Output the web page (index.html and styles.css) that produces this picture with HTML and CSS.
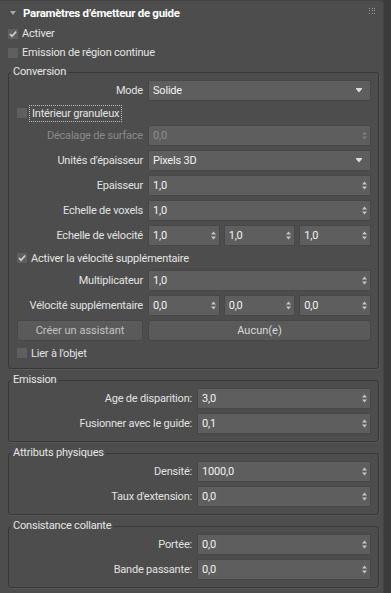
FILE: index.html
```html
<!DOCTYPE html>
<html lang="fr">
<head>
  <meta charset="UTF-8">
  <meta name="viewport" content="width=device-width, initial-scale=1.0">
  <title>Paramètres d'émetteur de guide</title>
  <link rel="stylesheet" href="styles.css">
</head>
<body>
  <div class="panel">
    <div class="head">
      <svg class="fold" width="6" height="5" viewBox="0 0 6 5"><polygon points="0,0 6,0 3,4" fill="#a8a8a8"/></svg>
      <span class="title">Paramètres d’émetteur de guide</span>
      <svg class="grip" width="7" height="7" viewBox="0 0 7 7">
        <g fill="#9a9a9a">
          <rect x="0" y="0" width="1" height="1"/><rect x="3" y="0" width="1" height="1"/><rect x="5" y="0" width="1" height="1"/>
          <rect x="0" y="2" width="1" height="1"/><rect x="3" y="2" width="1" height="1"/><rect x="5" y="2" width="1" height="1"/>
          <rect x="0" y="5" width="1" height="1"/><rect x="3" y="5" width="1" height="1"/><rect x="5" y="5" width="1" height="1"/>
        </g>
      </svg>
    </div>

    <label class="check top"><span class="box"><svg width="10" height="10" viewBox="0 0 10 10"><path d="M2 5 L4 7.2 L8.2 2.5" fill="none" stroke="#d4d4d4" stroke-width="1.6"/></svg></span>Activer</label>
    <label class="check top"><span class="box"></span>Emission de région continue</label>

    <fieldset class="group first">
      <legend>Conversion</legend>
      <div class="rows conv">
        <span class="lbl">Mode</span>
        <div class="field drop">Solide<svg width="6" height="5" viewBox="0 0 6 5"><polygon points="0,0 6,0 6,1 3,4.5 0,1" fill="#dcdcdc"/></svg></div>

        <label class="check wide"><span class="box"></span><span class="focus">Intérieur granuleux</span></label>

        <span class="lbl off">Décalage de surface</span>
        <div class="field off">0,0<svg class="spin" width="5" height="9" viewBox="0 0 5 9"><polygon points="0,3.5 2.5,0.5 5,3.5" /><polygon points="0,5.5 5,5.5 2.5,8.5"/></svg></div>

        <span class="lbl">Unités d'épaisseur</span>
        <div class="field drop">Pixels 3D<svg width="6" height="5" viewBox="0 0 6 5"><polygon points="0,0 6,0 6,1 3,4.5 0,1" fill="#dcdcdc"/></svg></div>

        <span class="lbl">Epaisseur</span>
        <div class="field">1,0<svg class="spin" width="5" height="9" viewBox="0 0 5 9"><polygon points="0,3.5 2.5,0.5 5,3.5" /><polygon points="0,5.5 5,5.5 2.5,8.5"/></svg></div>

        <span class="lbl">Echelle de voxels</span>
        <div class="field">1,0<svg class="spin" width="5" height="9" viewBox="0 0 5 9"><polygon points="0,3.5 2.5,0.5 5,3.5" /><polygon points="0,5.5 5,5.5 2.5,8.5"/></svg></div>

        <span class="lbl">Echelle de vélocité</span>
        <div class="triple">
          <div class="field">1,0<svg class="spin" width="5" height="9" viewBox="0 0 5 9"><polygon points="0,3.5 2.5,0.5 5,3.5" /><polygon points="0,5.5 5,5.5 2.5,8.5"/></svg></div>
          <div class="field">1,0<svg class="spin" width="5" height="9" viewBox="0 0 5 9"><polygon points="0,3.5 2.5,0.5 5,3.5" /><polygon points="0,5.5 5,5.5 2.5,8.5"/></svg></div>
          <div class="field">1,0<svg class="spin" width="5" height="9" viewBox="0 0 5 9"><polygon points="0,3.5 2.5,0.5 5,3.5" /><polygon points="0,5.5 5,5.5 2.5,8.5"/></svg></div>
        </div>

        <label class="check wide"><span class="box"><svg width="10" height="10" viewBox="0 0 10 10"><path d="M2 5 L4 7.2 L8.2 2.5" fill="none" stroke="#d4d4d4" stroke-width="1.6"/></svg></span>Activer la vélocité supplémentaire</label>

        <span class="lbl">Multiplicateur</span>
        <div class="field">1,0<svg class="spin" width="5" height="9" viewBox="0 0 5 9"><polygon points="0,3.5 2.5,0.5 5,3.5" /><polygon points="0,5.5 5,5.5 2.5,8.5"/></svg></div>

        <span class="lbl">Vélocité supplémentaire</span>
        <div class="triple">
          <div class="field">0,0<svg class="spin" width="5" height="9" viewBox="0 0 5 9"><polygon points="0,3.5 2.5,0.5 5,3.5" /><polygon points="0,5.5 5,5.5 2.5,8.5"/></svg></div>
          <div class="field">0,0<svg class="spin" width="5" height="9" viewBox="0 0 5 9"><polygon points="0,3.5 2.5,0.5 5,3.5" /><polygon points="0,5.5 5,5.5 2.5,8.5"/></svg></div>
          <div class="field">0,0<svg class="spin" width="5" height="9" viewBox="0 0 5 9"><polygon points="0,3.5 2.5,0.5 5,3.5" /><polygon points="0,5.5 5,5.5 2.5,8.5"/></svg></div>
        </div>

        <button class="btn dim">Créer un assistant</button>
        <button class="btn">Aucun(e)</button>

        <label class="check wide"><span class="box"></span>Lier à l'objet</label>
      </div>
    </fieldset>

    <fieldset class="group">
      <legend>Emission</legend>
      <div class="rows lower">
        <span class="lbl">Age de disparition:</span>
        <div class="field">3,0<svg class="spin" width="5" height="9" viewBox="0 0 5 9"><polygon points="0,3.5 2.5,0.5 5,3.5" /><polygon points="0,5.5 5,5.5 2.5,8.5"/></svg></div>
        <span class="lbl">Fusionner avec le guide:</span>
        <div class="field">0,1<svg class="spin" width="5" height="9" viewBox="0 0 5 9"><polygon points="0,3.5 2.5,0.5 5,3.5" /><polygon points="0,5.5 5,5.5 2.5,8.5"/></svg></div>
      </div>
    </fieldset>

    <fieldset class="group">
      <legend>Attributs physiques</legend>
      <div class="rows lower">
        <span class="lbl">Densité:</span>
        <div class="field">1000,0<svg class="spin" width="5" height="9" viewBox="0 0 5 9"><polygon points="0,3.5 2.5,0.5 5,3.5" /><polygon points="0,5.5 5,5.5 2.5,8.5"/></svg></div>
        <span class="lbl">Taux d'extension:</span>
        <div class="field">0,0<svg class="spin" width="5" height="9" viewBox="0 0 5 9"><polygon points="0,3.5 2.5,0.5 5,3.5" /><polygon points="0,5.5 5,5.5 2.5,8.5"/></svg></div>
      </div>
    </fieldset>

    <fieldset class="group">
      <legend>Consistance collante</legend>
      <div class="rows lower">
        <span class="lbl">Portée:</span>
        <div class="field">0,0<svg class="spin" width="5" height="9" viewBox="0 0 5 9"><polygon points="0,3.5 2.5,0.5 5,3.5" /><polygon points="0,5.5 5,5.5 2.5,8.5"/></svg></div>
        <span class="lbl">Bande passante:</span>
        <div class="field">0,0<svg class="spin" width="5" height="9" viewBox="0 0 5 9"><polygon points="0,3.5 2.5,0.5 5,3.5" /><polygon points="0,5.5 5,5.5 2.5,8.5"/></svg></div>
      </div>
    </fieldset>
  </div>
</body>
</html>
```

FILE: styles.css
```css
*{
  margin: 0;
  padding: 0;
  box-sizing: border-box;
}
body{
  background: #3b3b3b;
  font-family: Roboto, "Liberation Sans", sans-serif;
  font-size: 11px;
  letter-spacing: -0.2px;
  color: #e4e4e4;
}
.panel{
  width: 384px;
  background: #4d4d4d;
  border-top: 1px solid #444;
  border-right: 1px solid #444;
  border-top-right-radius: 4px;
  padding-top: 2px;
  padding-bottom: 6px;
}
.head{
  display: flex;
  align-items: center;
  height: 21px;
  padding: 0 7px 1px 10px;
}
.fold{
  margin-right: 7px;
}
.title{
  flex: 1;
  font-weight: bold;
  font-size: 11.5px;
  letter-spacing: -0.3px;
  color: #fff;
}
.grip{
  margin-bottom: 3px;
}

/* checkboxes */
.check{
  display: flex;
  align-items: center;
  height: 16px;
}
.check.top{
  height: 19px;
  padding-left: 8px;
}
.check.wide{
  grid-column: 1 / -1;
}
.box{
  display: inline-block;
  width: 10px;
  height: 10px;
  background: #5f5f5f;
  margin-right: 4px;
}
.box svg{
  display: block;
}
.focus{
  margin-left: -2px;
  padding: 1px 2px;
  border: 1px dotted #bdbdbd;
}

/* groups */
.group{
  margin: 0 4px 4px 8px;
  border: 1px solid #383838;
  border-radius: 3px;
  padding: 1px 7px 7px 8px;
  box-shadow: 1px 1px 0 #575757;
}
.group.first{
  margin-top: 3px;
}
.group legend{
  margin-left: -6px;
  padding: 0 2px;
  line-height: 14px;
  color: #e6e6e6;
}
.rows{
  display: grid;
  column-gap: 5px;
  row-gap: 4px;
  align-items: center;
}
.conv{
  grid-template-columns: 126px 1fr;
}
.lower{
  grid-template-columns: 1fr 174px;
}
.lbl{
  text-align: right;
  white-space: nowrap;
  color: #e2e2e2;
}
.lbl.off{
  color: #8a8a8a;
}

/* inputs */
.field{
  display: flex;
  align-items: center;
  justify-content: space-between;
  height: 21px;
  padding: 0 3px 0 4px;
  background: #5e5e5e;
  border: 1px solid #474747;
  color: #f2f2f2;
}
.field.off{
  color: #8e8e8e;
}
.field.drop{
  padding-right: 8px;
}
.spin{
  fill: #c4c4c4;
}
.field.off .spin{
  fill: #7c7c7c;
}
.triple{
  display: grid;
  grid-template-columns: 1fr 1fr 1fr;
  gap: 4px;
}
.btn{
  height: 21px;
  font: inherit;
  background: #5a5a5a;
  border: 1px solid #474747;
  border-radius: 3px;
  color: #d8d8d8;
}
.btn.dim{
  color: #c2c2c2;
}
```
